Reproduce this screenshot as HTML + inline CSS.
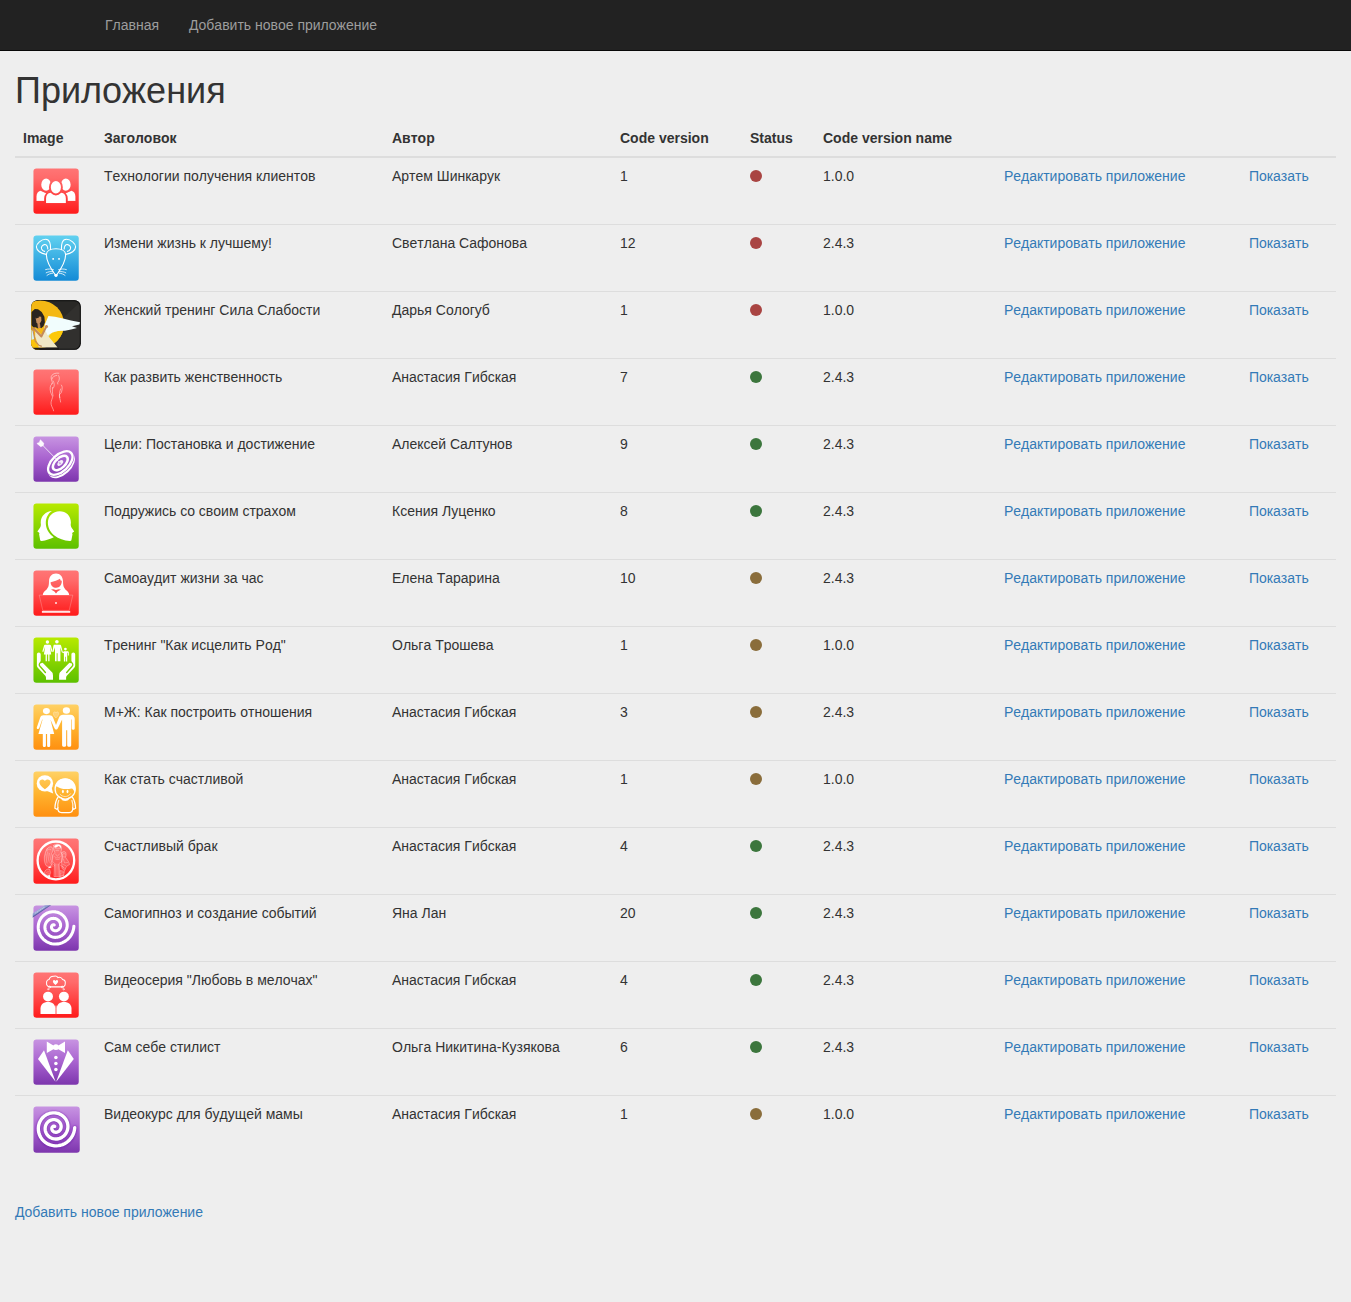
<!DOCTYPE html>
<html lang="ru">
<head>
<meta charset="utf-8">
<title>Приложения</title>
<style>
*{box-sizing:border-box}
html,body{margin:0;padding:0}
body{font-kerning:none;font-family:"Liberation Sans",sans-serif;font-size:14px;line-height:1.42857143;color:#333;background:#eee}
a{color:#337ab7;text-decoration:none}
.navbar{height:51px;background:#222;border-bottom:1px solid #080808;margin-bottom:20px}
.navbar ul{list-style:none;margin:0;padding:0 0 0 90px}
.navbar li{float:left}
.navbar li a{display:block;padding:15px 15px;line-height:20px;color:#9d9d9d}
.container{padding:0 15px}
h1{font-size:36px;height:39px;line-height:39px;margin:20px 0 10px;color:#333;font-weight:normal}
table{border-collapse:collapse;border-spacing:0;width:1321px;table-layout:fixed;margin-bottom:20px}
th{text-align:left;font-weight:bold;padding:8px;line-height:1.42857143;vertical-align:bottom;border-bottom:2px solid #ddd}
td{padding:8px;line-height:1.42857143;vertical-align:top;border-top:1px solid #ddd}
td.im{padding:8px 0 8px 16px}
.ic{display:block}
.dot{display:inline-block;width:12px;height:12px;border-radius:50%;vertical-align:-1px}
.dot.r{background:#a94442}
.dot.g{background:#3c763d}
.dot.w{background:#8a6d3b}
</style>
</head>
<body>
<div class="navbar">
<ul>
<li><a href="#">Главная</a></li>
<li><a href="#">Добавить новое приложение</a></li>
</ul>
</div>
<div class="container">
<h1>Приложения</h1>
<table>
<colgroup><col style="width:81px"><col style="width:288px"><col style="width:228px"><col style="width:130px"><col style="width:73px"><col style="width:181px"><col style="width:245px"><col style="width:95px"></colgroup>
<thead>
<tr><th>Image</th><th>Заголовок</th><th>Автор</th><th>Code version</th><th>Status</th><th>Code version name</th><th></th><th></th></tr>
</thead>
<tbody>

<tr>
<td class="im"><svg class="ic" width="50" height="50" viewBox="0 0 50 50"><defs><linearGradient id="g1" gradientUnits="userSpaceOnUse" x1="0" y1="2" x2="0" y2="48"><stop offset="0" stop-color="#ff7676"/><stop offset="0.22" stop-color="#ff6a6a"/><stop offset="1" stop-color="#ff1a1a"/></linearGradient></defs><rect x="2.45" y="2.5" width="45.3" height="45.3" rx="3" fill="url(#g1)"/><g fill="#fff" stroke="url(#g1)" stroke-width="1.9"><path stroke="none" d="M5.5,34.9V30.6C5.5,27.4 7.3,25.2 9.4,24.8L16,27.5V34.9Z"/><path stroke="none" d="M44.4,34.9V30.6C44.4,27.4 42.6,25.2 40.5,24.8L34,27.5V34.9Z"/><ellipse cx="15.1" cy="18.7" rx="5.8" ry="7.1"/><ellipse cx="34.8" cy="18.7" rx="5.8" ry="7.1"/><path d="M14.1,38.1V32.6C14.1,28.6 16.6,26 19.6,25.7H30.3C33.3,26 35.8,28.6 35.8,32.6V38.1Z"/><ellipse cx="24.9" cy="21.3" rx="6" ry="7.2"/></g><rect x="4" y="34.9" width="10" height="3" fill="url(#g1)"/><rect x="36" y="34.9" width="10" height="3" fill="url(#g1)"/><rect x="13" y="37.2" width="24" height="2" fill="url(#g1)"/></svg></td>
<td>Технологии получения клиентов</td>
<td>Артем Шинкарук</td>
<td>1</td>
<td><span class="dot r"></span></td>
<td>1.0.0</td>
<td><a href="#">Редактировать приложение</a></td>
<td><a href="#">Показать</a></td>
</tr>
<tr>
<td class="im"><svg class="ic" width="50" height="50" viewBox="0 0 50 50"><defs><linearGradient id="g2" gradientUnits="userSpaceOnUse" x1="0" y1="2" x2="0" y2="48"><stop offset="0" stop-color="#62d2f0"/><stop offset="1" stop-color="#138ad6"/></linearGradient></defs><rect x="2.45" y="2.5" width="45.3" height="45.3" rx="3" fill="url(#g2)"/><g fill="none" stroke="#fff" stroke-width="1.1" stroke-linecap="round" stroke-linejoin="round"><path d="M15.4,21.4C15.6,18 19.6,15.8 25,15.8C30.4,15.8 34.4,18 34.6,21.4C34.9,27.4 31.4,34.2 25,43C18.6,34.2 15.1,27.4 15.4,21.4Z"/><path d="M19.6,16.6C19.8,11 18.8,6.30 14.6,6.30C10.4,6.30 5.3,10.5 5.4,14C5.6,17.6 9.8,20.6 15.20,21.4"/><path d="M30.4,16.6C30.2,11 31.2,6.30 35.4,6.30C39.6,6.30 44.7,10.5 44.6,14C44.4,17.6 40.2,20.6 34.8,21.4"/><path d="M16.8,16C16.9,13.2 15.3,11.2 13.3,11.6C11.2,12 9.9,14.2 10.6,16C11.2,17.4 12.4,18.2 13.6,18.4"/><path d="M33.2,16C33.1,13.2 34.7,11.2 36.7,11.6C38.8,12 40.1,14.2 39.4,16C38.8,17.4 37.6,18.2 36.4,18.4"/><g stroke-width="0.8"><path d="M22.4,36.6C19.5,35.8 17,35.8 14.6,36.6M21.8,38.6C19.3,38.4 17,38.8 15.2,39.8M21.6,40.2C19.4,40.4 17.4,41.2 16,42.4"/><path d="M27.6,36.6C30.5,35.8 33,35.8 35.4,36.6M28.2,38.6C30.7,38.4 33,38.8 34.8,39.8M28.4,40.2C30.6,40.4 32.6,41.2 34,42.4"/></g></g><g fill="#fff"><rect x="21.3" y="24.9" width="1.7" height="1.8" rx="0.5"/><rect x="27.2" y="24.9" width="1.7" height="1.8" rx="0.5"/><circle cx="25" cy="42.3" r="1.6"/></g></svg></td>
<td>Измени жизнь к лучшему!</td>
<td>Светлана Сафонова</td>
<td>12</td>
<td><span class="dot r"></span></td>
<td>2.4.3</td>
<td><a href="#">Редактировать приложение</a></td>
<td><a href="#">Показать</a></td>
</tr>
<tr>
<td class="im"><svg class="ic" width="50" height="50" viewBox="0 0 50 50"><defs><clipPath id="c3"><rect x="0.2" y="0.2" width="49.6" height="49.6" rx="6.5"/></clipPath><clipPath id="d3"><circle cx="9.2" cy="24.2" r="23.8"/></clipPath></defs><g clip-path="url(#c3)"><rect width="50" height="50" fill="#31302e"/><path d="M10,0H50V1.5L33,17H10Z" fill="#292826"/><rect x="0.5" y="0.5" width="49" height="49" rx="6.2" fill="none" stroke="#121212" stroke-width="1.4"/><circle cx="9.2" cy="24.2" r="23.8" fill="#f4b814"/><path d="M15,33L34,30L34,36L25,46L10,46Z" fill="#fcc90a" clip-path="url(#d3)"/><path d="M0,40H8L8.5,50H0Z" fill="#fbc40c"/><path d="M0,29.6L2.6,31.5L3.4,39L0,40Z" fill="#d4f1f1"/><path d="M14,24L17.4,16L24,16.8L32,18.6L40,20.4L49,22.20L48.4,24.6L41,26.2L46,28L40,29.6L34,30.8L27,31L21.6,32.6L16,36L13,30Z" fill="#f1fdfd"/><path d="M16,36L21.6,32.6L27,31L24,31.5L20,33.5L17,37Z" fill="#cfeef0"/><path d="M4.2,28.2L5.8,30L10.2,34.4L14.4,30.8L16.8,35.6L26.6,47.4H7.9L4.2,36.6Z" fill="#f0e8c6"/><path d="M0.1,12.6L3.8,9.1L7,9.3L10.7,12L13.4,16.7L13.9,22.6L12.5,26.3L10.2,28.2L8.4,27.3L7,28.4L4.6,27.2L2.6,27.6L0.1,25Z" fill="#2a2420"/><path d="M4.6,17.8L7,16.4L10.2,16.8L10.4,20.8L8.8,23.6L7,24.6L5.4,22.2Z" fill="#c8905e"/><path d="M4.4,17.6L7.6,15.6L8,17.4L5,18.6Z" fill="#2a2420"/><path d="M6.5,24.2L8.9,23.2L9.6,27.6L7,28.6Z" fill="#c38a58"/><path d="M2.8,28.6L10.4,36.4L15.4,26.4" fill="none" stroke="#c38a58" stroke-width="2.1" stroke-linejoin="round" stroke-linecap="round"/><circle cx="15.5" cy="26.6" r="1.5" fill="#c8905e"/><path d="M1.4,27.5L4.2,41L8,45.4L10.8,46.4" fill="none" stroke="#c38a58" stroke-width="1.2" stroke-linejoin="round"/><path d="M0,47.8H28V50H0Z" fill="#1c1b1a"/><path d="M0,8V40" stroke="#d9a010" stroke-width="0.8"/></g></svg></td>
<td>Женский тренинг Сила Слабости</td>
<td>Дарья Сологуб</td>
<td>1</td>
<td><span class="dot r"></span></td>
<td>1.0.0</td>
<td><a href="#">Редактировать приложение</a></td>
<td><a href="#">Показать</a></td>
</tr>
<tr>
<td class="im"><svg class="ic" width="50" height="50" viewBox="0 0 50 50"><defs><linearGradient id="g4" gradientUnits="userSpaceOnUse" x1="0" y1="2" x2="0" y2="48"><stop offset="0" stop-color="#ff7676"/><stop offset="0.22" stop-color="#ff6a6a"/><stop offset="1" stop-color="#ff1a1a"/></linearGradient></defs><rect x="2.45" y="2.5" width="45.3" height="45.3" rx="3" fill="url(#g4)"/><g fill="none" stroke="#fff" stroke-opacity="0.62" stroke-width="0.75" stroke-linecap="round" stroke-linejoin="round"><path d="M27.8,6.2C24.6,5.8 21.4,6.6 20.3,9.4C19.6,11.6 21.2,13.8 21.6,16.6L20.4,16.8"/><path d="M25.8,8.4C23.4,8.6 21.2,10 21,12"/><path d="M27.6,8.6C28.8,10.4 28.8,13 26.6,15.8L26.8,17"/><path d="M22.2,14C23.2,16 24,18.6 22.20,21.2"/><path d="M20.4,17.4C19,18.4 18.8,22 19.6,25C20.4,27.6 21.8,29.2 21.4,30.8C20.6,33.4 19.6,35 20.2,37.6C20.8,40.2 22.4,42 22.6,43.8"/><path d="M21.4,20.4C21.2,23.4 21.4,26.6 22,29"/><path d="M30.4,18C31.6,19.4 31.4,22 30.4,25.4C29.8,27 28.6,26.6 28.4,28C28.2,30.4 29.4,32.6 29.6,35"/><path d="M29.6,22C28.6,24.6 28,27.6 28.8,30.6"/></g></svg></td>
<td>Как развить женственность</td>
<td>Анастасия Гибская</td>
<td>7</td>
<td><span class="dot g"></span></td>
<td>2.4.3</td>
<td><a href="#">Редактировать приложение</a></td>
<td><a href="#">Показать</a></td>
</tr>
<tr>
<td class="im"><svg class="ic" width="50" height="50" viewBox="0 0 50 50"><defs><linearGradient id="g5" gradientUnits="userSpaceOnUse" x1="0" y1="2" x2="0" y2="48"><stop offset="0" stop-color="#c895e2"/><stop offset="0.5" stop-color="#a862cf"/><stop offset="1" stop-color="#7c35ad"/></linearGradient></defs><rect x="2.45" y="2.5" width="45.3" height="45.3" rx="3" fill="url(#g5)"/><defs><linearGradient id="g5r" gradientUnits="userSpaceOnUse" x1="0" y1="2" x2="0" y2="48" gradientTransform="rotate(43) translate(-29.3,-29)"><stop offset="0" stop-color="#c895e2"/><stop offset="0.5" stop-color="#a862cf"/><stop offset="1" stop-color="#7c35ad"/></linearGradient></defs><g transform="translate(30.6,31.3) rotate(-43)"><ellipse rx="16" ry="9.4" fill="#fff"/></g><g transform="translate(29.3,29) rotate(-43)" fill="none" stroke="#fff"><ellipse rx="14.8" ry="8.3" stroke-width="3.5" stroke="url(#g5r)" fill="url(#g5r)"/><ellipse rx="14.8" ry="8.3" stroke-width="2.3"/><ellipse rx="9.1" ry="4.9" stroke-width="2.5"/><ellipse rx="3.5" ry="2" stroke-width="0" fill="#fff" fill-opacity="0.9"/></g><path d="M11.8,11.4L28.6,28.5" stroke="#fff" stroke-width="0.95" stroke-opacity="0.8" fill="none"/><path d="M5.9,9.4L8.3,8.5L9.4,5.8L12.8,9.2L12.3,11.6L9.8,12.7Z" fill="#fff" fill-opacity="0.95" stroke="#fff" stroke-width="0.5" stroke-linejoin="round"/><path d="M28.8,27.8L30.2,29.4L29,30.4L27.8,29.2Z" fill="#a862cf" fill-opacity="0.5"/></svg></td>
<td>Цели: Постановка и достижение</td>
<td>Алексей Салтунов</td>
<td>9</td>
<td><span class="dot g"></span></td>
<td>2.4.3</td>
<td><a href="#">Редактировать приложение</a></td>
<td><a href="#">Показать</a></td>
</tr>
<tr>
<td class="im"><svg class="ic" width="50" height="50" viewBox="0 0 50 50"><defs><linearGradient id="g6" gradientUnits="userSpaceOnUse" x1="0" y1="2" x2="0" y2="48"><stop offset="0" stop-color="#b8ea00"/><stop offset="1" stop-color="#5cc000"/></linearGradient></defs><rect x="2.45" y="2.5" width="45.3" height="45.3" rx="3" fill="url(#g6)"/><g fill="#fff"><path d="M28.6,10.2C35,10.2 39.9,14.6 39.9,21.6C39.9,22.8 39.6,23.6 39.8,24.6C40,26.4 41.6,28.4 43.2,30.4C42.4,31.2 41.4,31.4 41.2,31.9C41,32.4 41.6,32.8 41.5,33.3C41.2,35 40.8,37 40.4,39.2C40.2,39.8 39.6,40 38.8,39.9C33,39.4 27.6,37.6 23.4,34.4C19.2,31.2 16.9,26.6 16.9,21.7C16.9,15.4 21.6,10.2 28.6,10.2Z"/><path d="M20.9,9.9C15,10.4 9.7,14.6 9.7,21.6C9.7,22.8 10,23.6 9.8,24.6C9.6,26.4 8,28.4 6.4,30.4C7.2,31.2 8.2,31.4 8.4,31.9C8.6,32.4 8,32.8 8.1,33.3C8.4,35 8.8,37 9.2,39.2C9.4,39.8 10,40 10.8,39.9C15,39.4 19.2,38 22.8,36.2C17.6,32.6 14.8,27.6 14.8,22C14.8,16.6 17.2,12.2 20.9,9.9Z"/></g></svg></td>
<td>Подружись со своим страхом</td>
<td>Ксения Луценко</td>
<td>8</td>
<td><span class="dot g"></span></td>
<td>2.4.3</td>
<td><a href="#">Редактировать приложение</a></td>
<td><a href="#">Показать</a></td>
</tr>
<tr>
<td class="im"><svg class="ic" width="50" height="50" viewBox="0 0 50 50"><defs><linearGradient id="g7" gradientUnits="userSpaceOnUse" x1="0" y1="2" x2="0" y2="48"><stop offset="0" stop-color="#ff7676"/><stop offset="0.22" stop-color="#ff6a6a"/><stop offset="1" stop-color="#ff1a1a"/></linearGradient></defs><rect x="2.45" y="2.5" width="45.3" height="45.3" rx="3" fill="url(#g7)"/><path d="M25,5.6C29.2,5.6 32,8.6 32,13.6C32,17.4 32.6,19.6 34.4,21.4C36.4,23.2 38.2,24.4 38.2,27.2H11.8C11.8,24.4 13.6,23.2 15.6,21.4C17.4,19.6 18,17.4 18,13.6C18,8.6 20.8,5.6 25,5.6Z" fill="#fff"/><path d="M19.6,14.2C23.4,13.6 26.6,12.4 29,10.8L29.6,12.6L30.8,12.8C31,17 28.4,19.8 25.2,19.8C22,19.8 19.6,17.4 19.6,14.2Z" fill="url(#g7)"/><path d="M20,21.4L22.4,21.2L25,22L27.6,21.2L30,21.4L26.6,23.4L25,25.6L23.4,23.4Z" fill="url(#g7)"/><path d="M8.2,27.1H41.8L38.2,42.4H11.8Z" fill="url(#g7)" stroke="#fff" stroke-opacity="0.32" stroke-width="0.7"/><rect x="24" y="34" width="2" height="2" fill="#fff" fill-opacity="0.65"/><rect x="10.9" y="42.9" width="28.3" height="1.9" fill="#fff" fill-opacity="0.88"/></svg></td>
<td>Самоаудит жизни за час</td>
<td>Елена Тарарина</td>
<td>10</td>
<td><span class="dot w"></span></td>
<td>2.4.3</td>
<td><a href="#">Редактировать приложение</a></td>
<td><a href="#">Показать</a></td>
</tr>
<tr>
<td class="im"><svg class="ic" width="50" height="50" viewBox="0 0 50 50"><defs><linearGradient id="g8" gradientUnits="userSpaceOnUse" x1="0" y1="2" x2="0" y2="48"><stop offset="0" stop-color="#b8ea00"/><stop offset="1" stop-color="#5cc000"/></linearGradient></defs><rect x="2.45" y="2.5" width="45.3" height="45.3" rx="3" fill="url(#g8)"/><path d="M5.9,19.3A1.9,1.9 0 0 1 9.7,19.3V27.6L13,31L21,38C21.7,38.7 22,39.4 22,40.4V44.8H15V42.7C15,41.9 14.8,41.4 14.3,40.8L6.8,32.7C6.1,31.9 5.9,31.3 5.9,30.3Z" fill="#fff"/><path d="M10.9,26C9.4,27.4 8.1,28.8 8.3,30C8.4,30.7 8.9,31.2 9.4,31.8L14.4,37.5" fill="none" stroke="url(#g8)" stroke-width="1.4" stroke-linecap="round"/><path d="M11.3,29.1L20.4,38.4" stroke="#fff" stroke-width="2.4" stroke-linecap="round" fill="none"/><g transform="translate(50.1,0) scale(-1,1)"><path d="M5.9,19.3A1.9,1.9 0 0 1 9.7,19.3V27.6L13,31L21,38C21.7,38.7 22,39.4 22,40.4V44.8H15V42.7C15,41.9 14.8,41.4 14.3,40.8L6.8,32.7C6.1,31.9 5.9,31.3 5.9,30.3Z" fill="#fff"/><path d="M10.9,26C9.4,27.4 8.1,28.8 8.3,30C8.4,30.7 8.9,31.2 9.4,31.8L14.4,37.5" fill="none" stroke="url(#g8)" stroke-width="1.4" stroke-linecap="round"/><path d="M11.3,29.1L20.4,38.4" stroke="#fff" stroke-width="2.4" stroke-linecap="round" fill="none"/></g><g fill="#fff"><circle cx="16.4" cy="7" r="1.7"/><path d="M14,9.8H18.8C19.4,9.8 19.8,10.2 20,10.8L21.6,16.6L20.6,16.9L18.9,11.6L20.2,19.4H18.5V26.3H17.2V19.4H15.9V26.3H14.6V19.4H12.9L14.2,11.6L12.3,16.9L11.3,16.6L13,10.8C13.2,10.2 13.4,9.8 14,9.8Z"/><circle cx="25.9" cy="6.8" r="1.8"/><path d="M23.4,9.7H28.6C29.6,9.7 30,10.2 30.2,11L31.6,16.4L33,17.6L32.6,18.3L30.8,17.2L29.4,12.2V26.3H26.8V18.2H25.6V26.3H24V12.2L22.4,17L21.4,16.7L22.4,11C22.6,10.2 22.8,9.7 23.4,9.7Z"/><rect x="25.6" y="18.2" width="1.2" height="8.1" fill-opacity="0.35"/><circle cx="34.4" cy="14.1" r="1.35"/><path d="M33,16.2H36.4C37.4,16.2 37.8,16.8 37.8,17.6V20.6H36.9V17.8H36.2V26.6H34.9V21.8H34.2V26.6H32.9V17.4L32.2,17.9L31.8,17.2Z"/></g></svg></td>
<td>Тренинг "Как исцелить Род"</td>
<td>Ольга Трошева</td>
<td>1</td>
<td><span class="dot w"></span></td>
<td>1.0.0</td>
<td><a href="#">Редактировать приложение</a></td>
<td><a href="#">Показать</a></td>
</tr>
<tr>
<td class="im"><svg class="ic" width="50" height="50" viewBox="0 0 50 50"><defs><linearGradient id="g9" gradientUnits="userSpaceOnUse" x1="0" y1="2" x2="0" y2="48"><stop offset="0" stop-color="#ffd266"/><stop offset="0.5" stop-color="#ffb32e"/><stop offset="1" stop-color="#ff8f10"/></linearGradient></defs><rect x="2.45" y="2.5" width="45.3" height="45.3" rx="3" fill="url(#g9)"/><g fill="#fff"><ellipse cx="15.4" cy="9.1" rx="3.5" ry="3.05"/><ellipse cx="35.4" cy="8.4" rx="3.6" ry="3.25"/><path d="M12.4,13.2H18.6C20.2,13.2 21.4,14 22,15.6L25,23L28,15.6C28.8,13.6 30,12.70 32,12.70H39.6C42,12.70 43.7,14.4 43.7,16.8V26.4C43.7,28.2 40.8,28.2 40.8,26.4V17.4H40.2V43.2C40.2,45.4 36.2,45.4 36.2,43.2V28.2H35.2V43.2C35.2,45.4 31.1,45.4 31.1,43.2V17.4L27,26C26,28 24.4,28 23.4,26L19.4,17.4L23.2,31.9H19.2V43.4C19.2,45.4 16.1,45.4 16.1,43.4V31.9H14.9V43.4C14.9,45.4 11.8,45.4 11.8,43.4V31.9H7.4L11.6,17.6H11.2L8.2,26.2C7.6,27.6 5.4,27 5.8,25.4L9.2,15.4C9.8,14 10.8,13.2 12.4,13.2Z"/></g><path d="M25,15.9C22.8,14.2 21.9,12.2 22.5,10.7C23.2,9.4 24.6,9.6 25,10.7C25.4,9.6 27,9.4 27.5,10.7C28,12.2 27,14.2 25,15.9Z" fill="#fff" fill-opacity="0.22" stroke="#fff" stroke-opacity="0.5" stroke-width="0.5"/></svg></td>
<td>М+Ж: Как построить отношения</td>
<td>Анастасия Гибская</td>
<td>3</td>
<td><span class="dot w"></span></td>
<td>2.4.3</td>
<td><a href="#">Редактировать приложение</a></td>
<td><a href="#">Показать</a></td>
</tr>
<tr>
<td class="im"><svg class="ic" width="50" height="50" viewBox="0 0 50 50"><defs><linearGradient id="g10" gradientUnits="userSpaceOnUse" x1="0" y1="2" x2="0" y2="48"><stop offset="0" stop-color="#ffd266"/><stop offset="0.5" stop-color="#ffb32e"/><stop offset="1" stop-color="#ff8f10"/></linearGradient></defs><rect x="2.45" y="2.5" width="45.3" height="45.3" rx="3" fill="url(#g10)"/><circle cx="13.9" cy="14.4" r="8.2" fill="#fff"/><path d="M16,22L22.2,24.6L20.6,18.4Z" fill="#fff"/><path d="M13.9,20.2C10.6,17.6 8.4,15.6 8.4,13.20C8.4,10.2 12.4,9.4 13.9,12C15.4,9.4 19.6,10.2 19.6,13.20C19.6,15.6 17.2,17.6 13.9,20.2Z" fill="url(#g10)"/><g fill="none" stroke="#fff" stroke-width="1.25"><circle cx="34.2" cy="19.9" r="10.1"/><path d="M27.2,27.8C25,31 24,35.4 23.9,39.2L25.8,40.2L26.8,39.2C26.8,42 28,43.5 30.6,43.5H38.2C40.6,43.5 41.8,42 41.8,39.2L42.8,40.2L44.6,39.2C44.4,35.4 43.4,31 41.2,27.8"/><path d="M26.8,39.2C26.6,36 27,33 27.8,31M41.8,39.2C42,36 41.6,33 40.8,31" stroke-opacity="0.8"/><path d="M28.8,25C30.4,26.9 32.4,27.5 34.2,27.5C36.4,27.5 38.4,26.6 39.8,24.4" stroke-opacity="0.75" stroke-width="0.85"/></g><path d="M24.3,18.2C24.6,12.8 28.8,9.4 34.2,9.4C39.8,9.4 44.2,13.8 44.2,19.9C44.2,21.2 44,22.4 43.6,23.4C43,21 41.8,19.6 40.6,19.4C37.4,20.2 33,20.2 30.2,19.4C28.6,19 27,18.2 25.4,17.2Z" fill="#fff"/><ellipse cx="31.9" cy="22.5" rx="0.95" ry="1.7" fill="#fff"/><ellipse cx="36.5" cy="22.5" rx="0.95" ry="1.7" fill="#fff"/><path d="M29.6,28.2C30.2,30.9 31.8,32 34.2,32C36.6,32 38.2,30.9 38.8,28.2L37.2,28.6C36.8,29.9 35.8,30.3 34.2,30.3C32.6,30.3 31.6,29.9 31.2,28.6Z" fill="#fff" fill-opacity="0.95"/></svg></td>
<td>Как стать счастливой</td>
<td>Анастасия Гибская</td>
<td>1</td>
<td><span class="dot w"></span></td>
<td>1.0.0</td>
<td><a href="#">Редактировать приложение</a></td>
<td><a href="#">Показать</a></td>
</tr>
<tr>
<td class="im"><svg class="ic" width="50" height="50" viewBox="0 0 50 50"><defs><linearGradient id="g11" gradientUnits="userSpaceOnUse" x1="0" y1="2" x2="0" y2="48"><stop offset="0" stop-color="#ff7676"/><stop offset="0.22" stop-color="#ff6a6a"/><stop offset="1" stop-color="#ff1a1a"/></linearGradient></defs><rect x="2.45" y="2.5" width="45.3" height="45.3" rx="3" fill="url(#g11)"/><ellipse cx="24.9" cy="24.4" rx="18.3" ry="18.9" fill="none" stroke="#fff" stroke-width="2.3"/><g fill="#fff" fill-opacity="0.13" stroke="#fff" stroke-opacity="0.6" stroke-width="0.55" stroke-linejoin="round" stroke-linecap="round"><path d="M16,13C17.6,10.4 20.4,10 21.6,12C22.4,14 21.6,16 20.6,17.6C21.6,19.6 21.4,22 20.6,24.4L21.2,28.6L18,31L15,29.6C13.4,26.6 12.6,22 14,18C14.4,16 15,14.6 16,13Z"/><path d="M22.8,9.4C24.4,7.6 28.4,7.6 30,9.8C31,12 30.6,14 29.8,16.4L31.4,18.6L30.6,26L28,27.4L29,40.6H23L23.6,27.4L21.4,25.4L21.8,19L23.8,16.4C22.6,14 22.2,11.6 22.8,9.4Z"/><path d="M30.8,16.6C32,15.2 34,15.2 34.8,16.6C35.4,18.4 35,20 34.4,21.2L37.4,25.4L38.6,28.4L35.4,30.4L33.6,34.6L31,32.4L30.6,26L31.4,21.2C30.6,19.6 30.4,18 30.8,16.6Z"/><path d="M13.4,36.6C14,34 16.4,32.4 18.6,33.4L19.6,36.6L18.4,40.4L15.2,39.6Z"/><path d="M29.6,34.6L33.4,35.4L32.6,39.6L29.2,40.6Z"/><g fill="none" stroke-opacity="0.5" stroke-width="0.5"><path d="M15.4,15C16.4,13.4 18.4,12.6 19.8,13.6M15,18C15.6,21 15.2,24 16,27M16.6,16C17.2,19 17,22 18,25.4M18.4,17.4C19,19.4 19.6,21.6 19.4,24"/><path d="M24.4,12.4C25.6,13 27.4,13 28.6,12.4M25,14.6H27.6M24.6,18L26.4,20.4L28.4,18M23.6,20.6C25,22.4 27.6,22.4 29.4,20.6M24.6,23C25.8,23.8 27.4,23.8 28.6,23"/><path d="M24.6,28V40M26,28V40M27.4,28.4V40"/><path d="M32,18C32.6,17.4 33.6,17.4 34.2,18M32,20.6C32.8,21.2 33.6,21.2 34.2,20.6M32.4,23L33.6,27L36.6,26.4M32,28.4L34.6,29.6M31.6,30.6L33.4,33"/><path d="M14.6,37C15.6,36 17,35.6 18.2,36M15,38.4L18.4,37.6M16,39.6L18.6,39"/><path d="M30,36L32.8,36.6M29.8,37.6L32.6,38.2M29.6,39.2L32.4,39.6"/><path d="M19,26.4L22,30.6M20.4,25.6L23.4,29.6M29,29L33,31.6"/></g></g><g fill="#fff"><path d="M23.2,10.4C24.4,8.2 28.2,7.8 29.6,9.6C30.2,10.8 30.2,12 30,13C29.4,11.2 28.4,10.2 27.6,10C26.4,11 25,11.6 23.8,11.8Z"/><path d="M17.4,31L20.2,30.2L20.4,31.4L17.6,32.2Z"/><path d="M16.6,39.6L19,39.2L19.4,40.8L17.6,41.2Z"/></g></svg></td>
<td>Счастливый брак</td>
<td>Анастасия Гибская</td>
<td>4</td>
<td><span class="dot g"></span></td>
<td>2.4.3</td>
<td><a href="#">Редактировать приложение</a></td>
<td><a href="#">Показать</a></td>
</tr>
<tr>
<td class="im"><svg class="ic" width="50" height="50" viewBox="0 0 50 50"><defs><linearGradient id="g12" gradientUnits="userSpaceOnUse" x1="0" y1="2" x2="0" y2="48"><stop offset="0" stop-color="#c895e2"/><stop offset="0.5" stop-color="#a862cf"/><stop offset="1" stop-color="#7c35ad"/></linearGradient></defs><rect x="2.45" y="2.5" width="45.3" height="45.3" rx="3" fill="url(#g12)"/><defs><clipPath id="c12"><rect x="1.7" y="2.3" width="46" height="46" rx="3"/></clipPath><linearGradient id="r12" gradientUnits="userSpaceOnUse" x1="8" y1="6" x2="10.1" y2="9.2"><stop offset="0" stop-color="#a4addb"/><stop offset="0.55" stop-color="#8d97cc"/><stop offset="0.8" stop-color="#5a67a8"/><stop offset="1" stop-color="#3f4b8a"/></linearGradient></defs><path d="M42.90,23.20L42.65,25.41L42.15,27.57L41.42,29.64L40.46,31.60L39.28,33.43L37.92,35.10L36.38,36.59L34.69,37.88L32.88,38.97L30.97,39.84L28.98,40.48L26.95,40.88L24.89,41.05L22.85,40.98L20.84,40.68L18.89,40.16L17.03,39.42L15.28,38.48L13.66,37.35L12.18,36.05L10.88,34.61L9.76,33.03L8.83,31.35L8.11,29.59L7.60,27.77L7.30,25.91L7.22,24.05L7.35,22.21L7.69,20.40L8.22,18.66L8.95,17.01L9.86,15.46L10.93,14.03L12.15,12.75L13.50,11.63L14.95,10.68L16.49,9.90L18.10,9.31L19.75,8.92L21.42,8.71L23.09,8.71L24.73,8.89L26.33,9.25L27.87,9.79L29.32,10.50L30.66,11.36L31.89,12.37L32.99,13.49L33.94,14.73L34.73,16.05L35.37,17.45L35.83,18.89L36.12,20.36L36.24,21.85L36.19,23.32L35.97,24.76L35.59,26.16L35.06,27.49L34.38,28.74L33.58,29.89L32.65,30.93L31.63,31.85L30.51,32.63L29.33,33.28L28.09,33.78L26.81,34.13L25.52,34.33L24.23,34.37L22.95,34.27L21.71,34.03L20.52,33.65L19.39,33.14L18.34,32.51L17.38,31.77L16.52,30.93L15.78,30.02L15.15,29.03L14.64,27.99L14.26,26.92L14.02,25.82L13.90,24.71L13.91,23.61L14.05,22.53L14.31,21.49L14.68,20.50L15.15,19.57L15.73,18.72L16.39,17.94L17.12,17.26L17.92,16.68L18.77,16.19L19.65,15.82L20.56,15.56L21.48,15.40L22.40,15.35L23.31,15.41L24.18,15.57L25.02,15.83L25.81,16.18L26.55,16.61L27.21,17.12L27.81,17.69L28.32,18.31L28.75,18.98L29.09,19.68L29.35,20.41L29.51,21.14L29.58,21.88L29.57,22.61L29.48,23.31L29.31,23.99L29.06,24.63L28.74,25.22L28.37,25.76L27.94,26.25L27.47,26.67L26.97,27.02L26.43,27.30L25.89,27.52L25.33,27.66L24.77,27.74L24.22,27.74L23.69,27.68L23.18,27.57L22.71,27.39L22.27,27.17L21.87,26.90L21.51,26.59L21.21,26.26L20.96,25.90L20.76,25.52L20.61,25.13L20.51,24.74L20.47,24.36L20.47,23.99L20.52,23.63L20.62,23.29L20.74,22.99L20.91,22.71L21.09,22.46L21.31,22.25L21.53,22.08L21.77,21.95L22.01,21.86L22.25,21.80L22.48,21.78L22.70,21.80L22.91,21.84L23.10,21.91L23.26,22.01" fill="none" stroke="#fff" stroke-width="3.05" stroke-linecap="round" stroke-linejoin="round"/><g clip-path="url(#c12)"><path d="M0,11.45L16.96,0H23.2L0,15.65Z" fill="url(#r12)"/><path d="M4.2,10.4L13.6,4.1" stroke="#fff" stroke-opacity="0.4" stroke-width="1.1" stroke-dasharray="1.5 0.45" fill="none"/></g></svg></td>
<td>Самогипноз и создание событий</td>
<td>Яна Лан</td>
<td>20</td>
<td><span class="dot g"></span></td>
<td>2.4.3</td>
<td><a href="#">Редактировать приложение</a></td>
<td><a href="#">Показать</a></td>
</tr>
<tr>
<td class="im"><svg class="ic" width="50" height="50" viewBox="0 0 50 50"><defs><linearGradient id="g13" gradientUnits="userSpaceOnUse" x1="0" y1="2" x2="0" y2="48"><stop offset="0" stop-color="#ff7676"/><stop offset="0.22" stop-color="#ff6a6a"/><stop offset="1" stop-color="#ff1a1a"/></linearGradient></defs><rect x="2.45" y="2.5" width="45.3" height="45.3" rx="3" fill="url(#g13)"/><g fill="#fff"><circle cx="17" cy="26.6" r="4.95"/><circle cx="32.9" cy="26.6" r="4.95"/><path d="M9.5,44.1V38.6C9.5,34.4 12.4,31.9 17,31.9C21.6,31.9 24.3,34.4 24.3,38.6V44.1Z"/><path d="M25.7,44.1V38.6C25.7,34.4 28.4,31.9 33,31.9C37.6,31.9 40.5,34.4 40.5,38.6V44.1Z"/><rect x="24.3" y="35.6" width="1.4" height="8.5" fill-opacity="0.62"/><path d="M24.5,15C22.40,13.4 21.6,12 22,10.8C22.4,9.8 23.8,9.8 24.5,11C25.2,9.8 26.6,9.8 27,10.8C27.4,12 26.6,13.4 24.5,15Z"/></g><g fill="none" stroke="#fff" stroke-width="1.05" stroke-linejoin="round" stroke-linecap="round"><path d="M19.4,16.7C17,17.2 15.2,15.4 15.6,13.2C15.2,11.4 16.4,9.8 18,9.6C18.6,7.4 20.6,6 23,6.2C24.6,5.8 26.2,6.4 27,7.6C29,6.8 31,7.8 31.6,9.6C33.4,10 34.6,11.8 34.20,13.6C34.4,15.6 32.8,17.2 30.6,16.7"/><path d="M19.8,16.9H30.2" stroke-width="1.3"/><circle cx="18.6" cy="17" r="0.9" stroke-width="0.8"/><circle cx="31.2" cy="17" r="0.9" stroke-width="0.8"/><circle cx="17.2" cy="19.2" r="0.7" stroke-width="0.7" stroke-opacity="0.8"/><circle cx="32.6" cy="19.2" r="0.7" stroke-width="0.7" stroke-opacity="0.8"/></g></svg></td>
<td>Видеосерия "Любовь в мелочах"</td>
<td>Анастасия Гибская</td>
<td>4</td>
<td><span class="dot g"></span></td>
<td>2.4.3</td>
<td><a href="#">Редактировать приложение</a></td>
<td><a href="#">Показать</a></td>
</tr>
<tr>
<td class="im"><svg class="ic" width="50" height="50" viewBox="0 0 50 50"><defs><linearGradient id="g14" gradientUnits="userSpaceOnUse" x1="0" y1="2" x2="0" y2="48"><stop offset="0" stop-color="#c895e2"/><stop offset="0.5" stop-color="#a862cf"/><stop offset="1" stop-color="#7c35ad"/></linearGradient></defs><rect x="2.45" y="2.5" width="45.3" height="45.3" rx="3" fill="url(#g14)"/><g fill="#fff"><path d="M15.8,4.4V16L22.4,12.2H27.4L34,16V4.4L27.4,8.4H22.4Z"/><circle cx="24.9" cy="10.1" r="2.9"/><path d="M13,13.2L7,22L24.6,44.8Z"/><path d="M36.8,13.2L42.8,22L25.2,44.8Z"/><circle cx="24.9" cy="20.6" r="1.75"/><circle cx="24.9" cy="26.5" r="1.75"/><circle cx="24.9" cy="32.4" r="1.75"/></g></svg></td>
<td>Сам себе стилист</td>
<td>Ольга Никитина-Кузякова</td>
<td>6</td>
<td><span class="dot g"></span></td>
<td>2.4.3</td>
<td><a href="#">Редактировать приложение</a></td>
<td><a href="#">Показать</a></td>
</tr>
<tr>
<td class="im"><svg class="ic" width="50" height="50" viewBox="0 0 50 50"><defs><linearGradient id="g15" gradientUnits="userSpaceOnUse" x1="0" y1="2" x2="0" y2="49"><stop offset="0" stop-color="#c895e2"/><stop offset="0.5" stop-color="#a862cf"/><stop offset="1" stop-color="#7c35ad"/></linearGradient></defs><rect x="2.45" y="2.5" width="46.3" height="46.3" rx="3" fill="url(#g15)"/><defs><filter id="f15" x="-20%" y="-20%" width="140%" height="140%"><feGaussianBlur stdDeviation="0.9"/></filter></defs><g transform="translate(2,2) scale(1.02) translate(-2,-2)"><path d="M42.90,23.20L42.65,25.41L42.15,27.57L41.42,29.64L40.46,31.60L39.28,33.43L37.92,35.10L36.38,36.59L34.69,37.88L32.88,38.97L30.97,39.84L28.98,40.48L26.95,40.88L24.89,41.05L22.85,40.98L20.84,40.68L18.89,40.16L17.03,39.42L15.28,38.48L13.66,37.35L12.18,36.05L10.88,34.61L9.76,33.03L8.83,31.35L8.11,29.59L7.60,27.77L7.30,25.91L7.22,24.05L7.35,22.21L7.69,20.40L8.22,18.66L8.95,17.01L9.86,15.46L10.93,14.03L12.15,12.75L13.50,11.63L14.95,10.68L16.49,9.90L18.10,9.31L19.75,8.92L21.42,8.71L23.09,8.71L24.73,8.89L26.33,9.25L27.87,9.79L29.32,10.50L30.66,11.36L31.89,12.37L32.99,13.49L33.94,14.73L34.73,16.05L35.37,17.45L35.83,18.89L36.12,20.36L36.24,21.85L36.19,23.32L35.97,24.76L35.59,26.16L35.06,27.49L34.38,28.74L33.58,29.89L32.65,30.93L31.63,31.85L30.51,32.63L29.33,33.28L28.09,33.78L26.81,34.13L25.52,34.33L24.23,34.37L22.95,34.27L21.71,34.03L20.52,33.65L19.39,33.14L18.34,32.51L17.38,31.77L16.52,30.93L15.78,30.02L15.15,29.03L14.64,27.99L14.26,26.92L14.02,25.82L13.90,24.71L13.91,23.61L14.05,22.53L14.31,21.49L14.68,20.50L15.15,19.57L15.73,18.72L16.39,17.94L17.12,17.26L17.92,16.68L18.77,16.19L19.65,15.82L20.56,15.56L21.48,15.40L22.40,15.35L23.31,15.41L24.18,15.57L25.02,15.83L25.81,16.18L26.55,16.61L27.21,17.12L27.81,17.69L28.32,18.31L28.75,18.98L29.09,19.68L29.35,20.41L29.51,21.14L29.58,21.88L29.57,22.61L29.48,23.31L29.31,23.99L29.06,24.63L28.74,25.22L28.37,25.76L27.94,26.25L27.47,26.67L26.97,27.02L26.43,27.30L25.89,27.52L25.33,27.66L24.77,27.74L24.22,27.74L23.69,27.68L23.18,27.57L22.71,27.39L22.27,27.17L21.87,26.90L21.51,26.59L21.21,26.26L20.96,25.90L20.76,25.52L20.61,25.13L20.51,24.74L20.47,24.36L20.47,23.99L20.52,23.63L20.62,23.29L20.74,22.99L20.91,22.71L21.09,22.46L21.31,22.25L21.53,22.08L21.77,21.95L22.01,21.86L22.25,21.80L22.48,21.78L22.70,21.80L22.91,21.84L23.10,21.91L23.26,22.01" fill="none" stroke="#6a1aa8" stroke-opacity="0.75" stroke-width="4" stroke-linecap="round" filter="url(#f15)" transform="translate(0,0.5)"/><path d="M42.90,23.20L42.65,25.41L42.15,27.57L41.42,29.64L40.46,31.60L39.28,33.43L37.92,35.10L36.38,36.59L34.69,37.88L32.88,38.97L30.97,39.84L28.98,40.48L26.95,40.88L24.89,41.05L22.85,40.98L20.84,40.68L18.89,40.16L17.03,39.42L15.28,38.48L13.66,37.35L12.18,36.05L10.88,34.61L9.76,33.03L8.83,31.35L8.11,29.59L7.60,27.77L7.30,25.91L7.22,24.05L7.35,22.21L7.69,20.40L8.22,18.66L8.95,17.01L9.86,15.46L10.93,14.03L12.15,12.75L13.50,11.63L14.95,10.68L16.49,9.90L18.10,9.31L19.75,8.92L21.42,8.71L23.09,8.71L24.73,8.89L26.33,9.25L27.87,9.79L29.32,10.50L30.66,11.36L31.89,12.37L32.99,13.49L33.94,14.73L34.73,16.05L35.37,17.45L35.83,18.89L36.12,20.36L36.24,21.85L36.19,23.32L35.97,24.76L35.59,26.16L35.06,27.49L34.38,28.74L33.58,29.89L32.65,30.93L31.63,31.85L30.51,32.63L29.33,33.28L28.09,33.78L26.81,34.13L25.52,34.33L24.23,34.37L22.95,34.27L21.71,34.03L20.52,33.65L19.39,33.14L18.34,32.51L17.38,31.77L16.52,30.93L15.78,30.02L15.15,29.03L14.64,27.99L14.26,26.92L14.02,25.82L13.90,24.71L13.91,23.61L14.05,22.53L14.31,21.49L14.68,20.50L15.15,19.57L15.73,18.72L16.39,17.94L17.12,17.26L17.92,16.68L18.77,16.19L19.65,15.82L20.56,15.56L21.48,15.40L22.40,15.35L23.31,15.41L24.18,15.57L25.02,15.83L25.81,16.18L26.55,16.61L27.21,17.12L27.81,17.69L28.32,18.31L28.75,18.98L29.09,19.68L29.35,20.41L29.51,21.14L29.58,21.88L29.57,22.61L29.48,23.31L29.31,23.99L29.06,24.63L28.74,25.22L28.37,25.76L27.94,26.25L27.47,26.67L26.97,27.02L26.43,27.30L25.89,27.52L25.33,27.66L24.77,27.74L24.22,27.74L23.69,27.68L23.18,27.57L22.71,27.39L22.27,27.17L21.87,26.90L21.51,26.59L21.21,26.26L20.96,25.90L20.76,25.52L20.61,25.13L20.51,24.74L20.47,24.36L20.47,23.99L20.52,23.63L20.62,23.29L20.74,22.99L20.91,22.71L21.09,22.46L21.31,22.25L21.53,22.08L21.77,21.95L22.01,21.86L22.25,21.80L22.48,21.78L22.70,21.80L22.91,21.84L23.10,21.91L23.26,22.01" fill="none" stroke="#fff" stroke-width="3.3" stroke-linecap="round" stroke-linejoin="round"/></g></svg></td>
<td>Видеокурс для будущей мамы</td>
<td>Анастасия Гибская</td>
<td>1</td>
<td><span class="dot w"></span></td>
<td>1.0.0</td>
<td><a href="#">Редактировать приложение</a></td>
<td><a href="#">Показать</a></td>
</tr>
</tbody>
</table>
<br>
<a href="#">Добавить новое приложение</a>
</div>
</body>
</html>
